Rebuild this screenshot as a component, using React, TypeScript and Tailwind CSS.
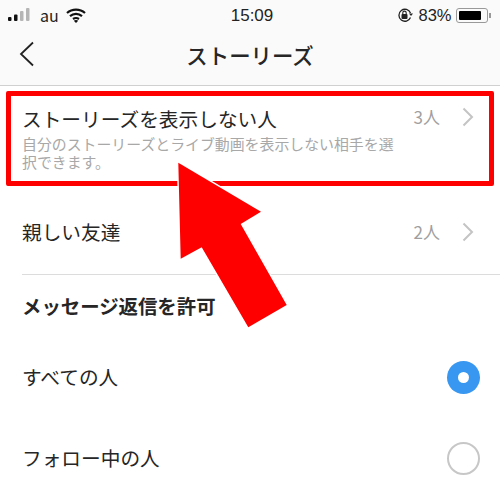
const font = { fontFamily: '"Noto Sans CJK JP", "Liberation Sans", sans-serif' }

const Chevron = () => (
  <svg width="12" height="20" viewBox="0 0 12 20" fill="none" stroke="#c4c4c4" strokeWidth="2">
    <path d="M1.5 1.5 L10 10 L1.5 18.5" />
  </svg>
)

const App = () => {
  return (
    <div className="relative w-[500px] h-[496px] overflow-hidden bg-white text-[#262626]" style={font}>
      <div className="h-[86px] bg-[#fafafa] border-b border-[#d0d0d0]">
        <div className="h-[28px] pt-[2px] px-2 flex items-center justify-between text-[#222]">
          <div className="flex items-center gap-[9px] w-[184px]">
            <svg width="23" height="14" viewBox="0 0 23 14">
              <rect x="0" y="9" width="3.5" height="4" rx="1" fill="#111" />
              <rect x="6" y="6.5" width="3.5" height="6.5" rx="1" fill="#111" />
              <rect x="12" y="3" width="3.5" height="10" rx="1" fill="#b5b5b5" />
              <rect x="18" y="0" width="3.5" height="13" rx="1" fill="#b5b5b5" />
            </svg>
            <span className="text-[16px] leading-none">au</span>
            <svg width="20" height="15" viewBox="0 0 20 15" fill="none" stroke="#111" strokeWidth="2.2" className="ml-[-2px]">
              <path d="M1 5 C6 0.5 14 0.5 19 5" />
              <path d="M4 8.2 C7.5 5.2 12.5 5.2 16 8.2" />
              <path d="M7 11 C8.8 9.8 11.2 9.8 13 11" />
              <path d="M10 15 L7.8 12.7 C9 11.8 11 11.8 12.2 12.7 Z" fill="#111" stroke="none" />
            </svg>
          </div>
          <span className="text-[17px] leading-none font-medium" style={{ fontFamily: '"Liberation Sans", sans-serif' }}>15:09</span>
          <div className="flex items-center justify-end gap-[5px] w-[180px] pr-[1px]">
            <svg width="16" height="16" viewBox="0 0 16 16" fill="none">
              <path d="M13.5 6 A6 6 0 1 0 13.5 10.5" stroke="#222" strokeWidth="1.3" />
              <path d="M12 6.5 L16 6.5 L14 9 Z" fill="#222" />
              <rect x="4.5" y="7" width="6" height="5" rx="1" fill="#222" />
              <path d="M5.8 7.5 V5.8 A1.7 1.7 0 0 1 9.2 5.8 V7.5" stroke="#222" strokeWidth="1.1" />
            </svg>
            <span className="text-[16.5px] leading-none" style={{ fontFamily: '"Liberation Sans", sans-serif' }}>83%</span>
            <div className="flex items-center gap-[1px]">
              <div className="w-[32px] h-[15px] rounded-[3px] border border-[#999] p-[2px]">
                <div className="w-[83%] h-full bg-black rounded-[1px]" />
              </div>
              <div className="w-[1.5px] h-[5px] bg-[#999]" />
            </div>
          </div>
        </div>
        <div className="relative h-[55px] flex items-center justify-center">
          <h1 className="text-[21.4px] leading-none font-medium mt-[-1px]">ストーリーズ</h1>
          <svg width="16" height="26" viewBox="0 0 16 26" fill="none" stroke="#222" strokeWidth="1.8" className="absolute left-[19px] top-[13px]">
            <path d="M14 1.5 L2 13 L14 24.5" />
          </svg>
        </div>
      </div>

      <div className="h-[102px] pl-[22px] pr-[26px] pt-[20px] flex justify-between">
        <div className="w-[376px]">
          <div className="text-[19.7px] leading-[26px] whitespace-nowrap">ストーリーズを表示しない人</div>
          <p className="text-[14.9px] leading-[18px] text-[#a8a8a8] mt-[3px]">自分のストーリーズとライブ動画を表示しない相手を選択できます。</p>
        </div>
        <div className="flex items-start gap-[22px] mt-[-1px]">
          <span className="text-[17px] leading-[24px] text-[#a0a0a0]">3人</span>
          <div className="pt-[2px]"><Chevron /></div>
        </div>
      </div>

      <div className="h-[87px] pl-[22px] pr-[26px] flex items-center justify-between">
        <span className="text-[19.7px] leading-[26px]">親しい友達</span>
        <div className="flex items-center gap-[22px]">
          <span className="text-[17px] leading-[24px] text-[#a0a0a0]">2人</span>
          <Chevron />
        </div>
      </div>

      <div className="ml-[22px] h-px bg-[#dcdcdc] mt-[-1px]" />
      <div className="pl-[22px] pt-[18px] text-[19.4px] leading-[26px] font-bold">メッセージ返信を許可</div>

      <div className="mt-[33px] h-[50px] pl-[22px] pr-[20px] flex items-center justify-between">
        <span className="text-[19.7px]">すべての人</span>
        <div className="w-[33px] h-[33px] rounded-full bg-[#3897f0] flex items-center justify-center">
          <div className="w-[11px] h-[11px] rounded-full bg-white" />
        </div>
      </div>
      <div className="mt-[31px] h-[50px] pl-[22px] pr-[20px] flex items-center justify-between">
        <span className="text-[19.7px]">フォロー中の人</span>
        <div className="w-[33px] h-[33px] rounded-full border-2 border-[#c7c7c7]" />
      </div>

      {/* red annotation box + arrow on top of the screenshot */}
      <div className="absolute left-[6px] top-[91px] w-[488px] h-[95px] border-[5px] border-[#ff0000] rounded-[2px]" />
      <svg width="500" height="496" viewBox="0 0 500 496" className="absolute left-0 top-0">
        <path
          d="M178.3 162.7 L261 211.7 L240.7 224 L286.7 305 L248.3 327.3 L201.7 247.3 L180.7 258.7 Z"
          fill="#ff0000"
          stroke="#ffffff"
          strokeWidth="3"
          paintOrder="stroke"
        />
      </svg>
    </div>
  )
}

export default App
